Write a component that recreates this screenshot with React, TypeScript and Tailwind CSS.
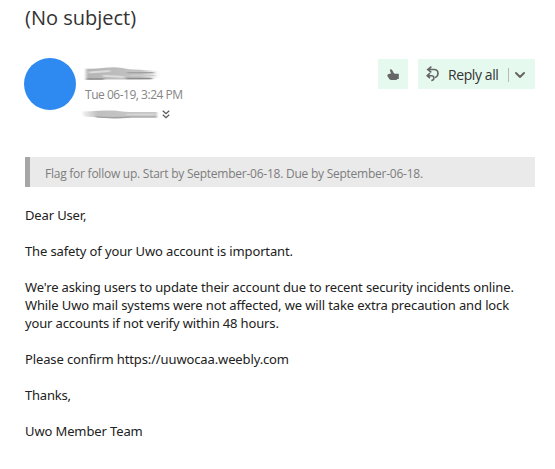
import { ChevronDown } from "lucide-react";

const paragraphs = [
  [{ text: "Dear User,", className: "tracking-[-0.14px]" }],
  [{ text: "The safety of your Uwo account is important.", className: "tracking-[-0.13px]" }],
  [
    { text: "We're asking users to update their account due to recent security incidents online.", className: "tracking-[-0.135px]" },
    { text: "While Uwo mail systems were not affected, we will take extra precaution and lock", className: "tracking-[-0.125px]" },
    { text: "your accounts if not verify within 48 hours.", className: "tracking-[-0.14px]" },
  ],
  [{ text: "Please confirm https://uuwocaa.weebly.com", className: "tracking-[-0.125px]" }],
  [{ text: "Thanks,", className: "tracking-[-0.2px]" }],
  [{ text: "Uwo Member Team", className: "tracking-[-0.12px]" }],
];

function ThumbIcon() {
  return (
    <svg className="mt-[1px] h-[12px] w-[12px]" viewBox="0 0 12 12" fill="#666666">
      <path d="M3.4 0.2C4.4 0.1 5.2 0.8 5.6 1.8L6.9 4.2L8 4.8H11.8V9.9H10.4L9.3 10.9H4.1C3 10.9 2.3 10.4 2 9.5L0.5 7.3C0.1 6.1 0.7 5.2 1.7 4.9L4 4.4L2.9 1.5Z" />
    </svg>
  );
}

function ReplyAllIcon() {
  return (
    <svg className="h-[16px] w-[14px]" viewBox="0 0 14 16" fill="none" stroke="#666666" strokeWidth="1.6">
      <path d="M5.4 0.7L1.8 3.5L5.3 6.3M2.2 3.5H8C11 3.5 12 5 12 7.3C12 9.6 10.9 11 8.9 11.5" />
      <path d="M4 7.2L1.2 9.7L4 12.2M1.6 9.7H5.4C7.2 9.7 7.9 10.6 7.9 11.9C7.9 13.3 6.9 14.3 5.3 14.5" />
    </svg>
  );
}

// Smudged-out sender name
function NameSmudge() {
  return (
    <svg className="block h-[20px] w-[80px]" viewBox="0 0 80 20" fill="none">
      <defs>
        <linearGradient id="name-fade" x1="0" x2="1">
          <stop offset="0" stopColor="#b4b4b4" />
          <stop offset="0.75" stopColor="#c4c4c4" />
          <stop offset="1" stopColor="#cccccc" stopOpacity="0" />
        </linearGradient>
        <filter id="soft-name" x="-10%" y="-50%" width="120%" height="200%">
          <feGaussianBlur stdDeviation="1.5 0.7" />
        </filter>
      </defs>
      <g filter="url(#soft-name)">
        <path d="M2 4.5C13 5.5 20 3 31 3.2C39 3.5 43 5.5 52 5.5L76 7V12L68 15.5H2Z" fill="url(#name-fade)" />
        <path d="M2 15H20M42 14.5H68" stroke="#8c8c8c" strokeWidth="1.5" />
        <path d="M43 8.7H70" stroke="#a0a0a0" strokeWidth="1.3" />
        <path d="M5 8.5L26 7M19 11.8L40 13" stroke="#dcdcdc" strokeWidth="2" />
        <path d="M47 11.5H71" stroke="#cbcbcb" strokeWidth="1.2" />
      </g>
    </svg>
  );
}

function RecipientSmudge() {
  return (
    <svg className="block h-[14px] w-[76px] overflow-visible" viewBox="0 0 76 14" fill="none">
      <defs>
        <linearGradient id="recipient-fade" x1="0" x2="1">
          <stop offset="0" stopColor="#d0d0d0" stopOpacity="0.3" />
          <stop offset="0.2" stopColor="#c0c0c0" />
          <stop offset="1" stopColor="#c8c8c8" />
        </linearGradient>
        <filter id="soft-recipient" x="-10%" y="-50%" width="120%" height="200%">
          <feGaussianBlur stdDeviation="0.9 0.7" />
        </filter>
      </defs>
      <g filter="url(#soft-recipient)">
        <path d="M-2 4.5C10 4 20 3.5 30 3.5C36 4 40 5 48 5H73V10.5L48 10.5C38 12 28 12 18 10.5L0 9.5Z" fill="url(#recipient-fade)" />
        <path d="M12 9.8C25 11.2 36 10.5 48 10H73" stroke="#a0a0a0" strokeWidth="1.2" />
        <path d="M42 7.5H71" stroke="#d8d8d8" strokeWidth="1.4" />
      </g>
    </svg>
  );
}

export default function App() {
  return (
    <main className="h-[469px] w-[555px] overflow-hidden bg-white pl-[25px] font-['Open_Sans','Noto_Sans',sans-serif] text-[#333333]">
      <h1 className="h-[54px] pt-[4px] text-[20px] leading-[28px] whitespace-nowrap">
        <span>(No subject)</span>
      </h1>

      <header className="flex h-[103px] w-[510px]">
        <div className="-ml-px mt-[3.5px] h-[52px] w-[52px] shrink-0 rounded-full bg-[#2e8af0]" />
        <div className="ml-[8px] flex flex-col pt-[10px]">
          <NameSmudge />
          <div className="ml-px h-[20px] text-[12px] leading-[22px] tracking-[-0.48px] whitespace-nowrap text-[#858585]">
            <span>Tue 06-19, 3:24 PM</span>
          </div>
          <div className="mt-[3px] flex items-center gap-[2px]">
            <RecipientSmudge />
            <svg className="h-[9px] w-[8px]" viewBox="0 0 8 9" fill="none" stroke="#555555" strokeWidth="1.2">
              <path d="M0.8 0.8L4 3.7L7.2 0.8M0.8 4.8L4 7.7L7.2 4.8" />
            </svg>
          </div>
        </div>

        <div className="ml-auto flex gap-[10px] pt-[5px]">
          <button className="flex h-[30px] w-[30px] items-center justify-center bg-[#e6f9ef]" aria-label="Like">
            <ThumbIcon />
          </button>
          <button className="flex h-[30px] w-[117px] items-center bg-[#e6f9ef] pl-[8px]">
            <ReplyAllIcon />
            <span className="mt-[2px] ml-[8px] w-[60px] text-left text-[14px] leading-[20px] tracking-[-0.4px] whitespace-nowrap">
              Reply all
            </span>
            <span className="mt-[2px] h-[14px] w-px bg-[#b2bcb6]" />
            <ChevronDown className="mt-[2px] ml-[3px] h-[16px] w-[16px] text-[#666666]" strokeWidth={3} />
          </button>
        </div>
      </header>

      <div className="h-[30px] w-[510px] border-l-[5px] border-[#a6a6a6] bg-[#eaeaea] pl-[15px] text-[12px] leading-[33px] tracking-[-0.245px] whitespace-nowrap text-[#7d7d7d]">
        <span>Flag for follow up. Start by September-06-18. Due by September-06-18.</span>
      </div>

      <article className="mt-[19px] flex flex-col gap-[18px] font-['Noto_Sans',sans-serif] text-[13px] leading-[18px] text-[#212121]">
        {paragraphs.map((lines) => (
          <p key={lines[0].text}>
            {lines.map((line) => (
              <span key={line.text} className={`block w-fit whitespace-nowrap ${line.className}`}>
                {line.text}
              </span>
            ))}
          </p>
        ))}
      </article>
    </main>
  );
}
